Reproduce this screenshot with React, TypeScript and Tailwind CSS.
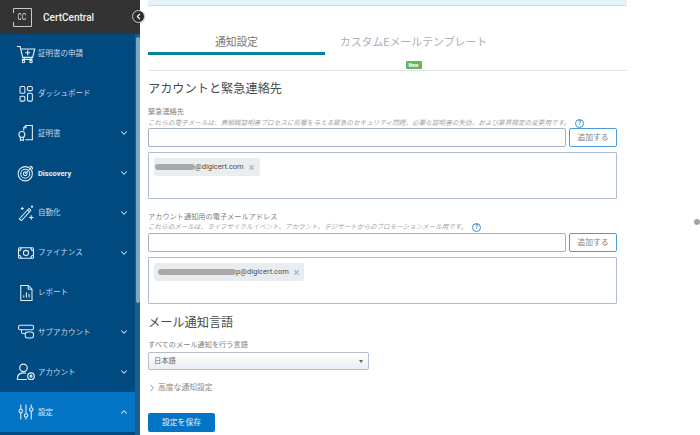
import React from 'react';
import { ChevronDown, ChevronLeft, ChevronRight, ChevronUp, X } from 'lucide-react';

const font = { fontFamily: 'Roboto, "Noto Sans CJK JP", sans-serif' };

const ic = { width: 18, height: 18, viewBox: '0 0 24 24', fill: 'none', stroke: 'currentColor', strokeWidth: 1.4 };

const CartIcon = () => (
  <svg {...ic} width={20} height={20}>
    <path d="M1 3h4l3 13h12l2.500-10H6" />
    <path d="M10 16v2M18 16v2M7 18.500h13" />
    <circle cx="9" cy="21" r="1.500" />
    <circle cx="18" cy="21" r="1.500" />
    <path d="M14 7.500v6M11 10.500h6" />
  </svg>
);
const DashIcon = () => (
  <svg {...ic}>
    <rect x="4" y="2" width="6.500" height="9" rx="1.500" />
    <rect x="14" y="2" width="6.500" height="5.500" rx="1.500" />
    <rect x="4" y="15" width="6.500" height="6.500" rx="1.500" />
    <rect x="14" y="11" width="6.500" height="10.500" rx="1.500" />
  </svg>
);
const CertIcon = () => (
  <svg {...ic}>
    <path d="M9 9V4.500L12 2h8.500v19H11" />
    <path d="M12 2v3H9" />
    <circle cx="6.500" cy="14" r="4" />
    <path d="M4.500 18v4l2-1 2 1v-4" />
  </svg>
);
const DiscoveryIcon = () => (
  <svg {...ic}>
    <circle cx="11" cy="13" r="9.500" />
    <circle cx="11" cy="13" r="6" />
    <circle cx="11" cy="13" r="2.500" />
    <path d="M11 13 20 4M17 3l3 1 1 3" />
  </svg>
);
const WandIcon = () => (
  <svg {...ic}>
    <path d="M3 20 16 6l2.500 2.500L6 22z" />
    <path d="m14 8 2.500 2.500M7 4v4M5 6h4M19 15v6M16 18h6M20 2v3M18.500 3.500h3" />
  </svg>
);
const MoneyIcon = () => (
  <svg {...ic} width={20}>
    <rect x="2" y="5" width="20" height="14" rx="1.500" />
    <circle cx="12" cy="12" r="3.500" />
    <path d="M2 9c2 0 3.500-2 3.500-4M22 9c-2 0-3.500-2-3.500-4M2 15c2 0 3.500 2 3.500 4M22 15c-2 0-3.500 2-3.500 4" />
  </svg>
);
const ReportIcon = () => (
  <svg {...ic}>
    <path d="M5 2h10l5 5v15H5z" />
    <path d="M15 2v5h5M9 18v-3M12.500 18v-7M16 18v-5" />
  </svg>
);
const SubIcon = () => (
  <svg {...ic}>
    <rect x="2" y="3" width="20" height="6" rx="2" />
    <path d="M6 9v3a2 2 0 0 0 2 2h3" />
    <rect x="11" y="12" width="11" height="8" rx="3" />
  </svg>
);
const AccountIcon = () => (
  <svg {...ic} width={20} height={20}>
    <circle cx="9" cy="7" r="4.500" />
    <path d="M1.500 21c0-5 3-8 7.500-8 1 0 2 .2 3 .5M1.500 21H13" />
    <circle cx="18" cy="17" r="4" />
    <circle cx="18" cy="17" r="1.200" />
  </svg>
);
const SlidersIcon = () => (
  <svg {...ic}>
    <path d="M5 2v6M5 13v9M12 2v12M12 19v3M19 2v4M19 11v11" />
    <circle cx="5" cy="10.500" r="2.300" />
    <circle cx="12" cy="16.500" r="2.300" />
    <circle cx="19" cy="8.500" r="2.300" />
  </svg>
);

const navItems = [
  { label: '証明書の申請', icon: <CartIcon />, arrow: false },
  { label: 'ダッシュボード', icon: <DashIcon />, arrow: false },
  { label: '証明書', icon: <CertIcon />, arrow: true },
  { label: 'Discovery', icon: <DiscoveryIcon />, arrow: true, bold: true },
  { label: '自動化', icon: <WandIcon />, arrow: true },
  { label: 'ファイナンス', icon: <MoneyIcon />, arrow: true },
  { label: 'レポート', icon: <ReportIcon />, arrow: false },
  { label: 'サブアカウント', icon: <SubIcon />, arrow: true },
  { label: 'アカウント', icon: <AccountIcon />, arrow: true },
];

function NavRow({ item }: { item: (typeof navItems)[number] }) {
  return (
    <div className="flex h-[39.8px] shrink-0 items-center pl-[14px] pr-[6px]">
      <div className="flex w-[24px] justify-center text-[#e6eff6]">{item.icon}</div>
      <span className={`flex-1 text-[7.500px] ${item.bold ? 'font-bold text-[#e8f0f6]' : 'text-[#c6d9e8]'}`}>{item.label}</span>
      {item.arrow && <ChevronDown size={10} strokeWidth={2.500} className="text-[#dce8f1]" />}
    </div>
  );
}

function Logo() {
  return (
    <div className="relative flex h-[19px] w-[19px] items-center justify-center text-[8.500px] text-[#e6e6e6]">
      <svg width="19" height="19" viewBox="0 0 19 19" fill="none" stroke="#c9c9c9" strokeWidth="1" className="absolute inset-0">
        <path d="M.5 5V.5h18v18H.5V14" />
      </svg>
      <span className="scale-x-75 tracking-[0.5px]">CC</span>
    </div>
  );
}

function Sidebar() {
  return (
    <aside className="flex w-[140px] shrink-0 flex-col bg-[#004a80]">
      <div className="flex h-[34px] shrink-0 items-center bg-[#333333] pl-[13px]">
        <Logo />
        <span className="ml-[11px] text-[10px] font-medium text-[#f2f2f2]">CertCentral</span>
      </div>
      <div className="flex min-h-0 flex-1">
        <nav className="flex w-[135px] flex-col">
          {navItems.map((item) => (
            <NavRow key={item.label} item={item} />
          ))}
          <div className="flex h-[40px] shrink-0 items-center bg-[#0474c4] pl-[14px] pr-[6px]">
            <div className="flex w-[24px] justify-center text-[#e6eff6]">
              <SlidersIcon />
            </div>
            <span className="flex-1 text-[7.500px] text-[#dceaf5]">設定</span>
            <ChevronUp size={10} strokeWidth={2.500} className="text-[#e6eff6]" />
          </div>
        </nav>
        <div className="w-[5px] bg-[#1a5c8e]">
          <div className="mt-[3px] ml-[0.500px] h-[266px] w-[4px] rounded-sm bg-[#7fa5c1]" />
        </div>
      </div>
    </aside>
  );
}

function Chip({ hidden, widthClass, redact }: { hidden: string; widthClass: string; redact: string }) {
  return (
    <div className={`flex h-[18px] items-center rounded-[2px] bg-[#e9edf0] pl-[1px] ${widthClass}`}>
      <span className={`h-[6px] rounded-full bg-[#a9a9a9] blur-[0.6px] ${redact}`} />
      <span className="text-[7.500px] text-[#4a4a4a]">{hidden}</span>
      <X size={7} strokeWidth={4} className="ml-[4px] text-[#b0b5b9]" />
    </div>
  );
}

function ContactGroup({ label, desc, chip, topGap, descClass }: { label: string; desc: string; chip: React.ReactNode; topGap: string; descClass: string }) {
  return (
    <section className={topGap}>
      <div className="text-[7.200px] leading-[10px] text-[#808080]">{label}</div>
      <div className={`flex h-[10px] items-center text-[6.550px] leading-[10px] text-[#a3a3a3] italic ${descClass}`}>
        <span>{desc}</span>
        <span className="ml-[5px] flex h-[9px] w-[9px] items-center justify-center rounded-full border border-[#3f8fd0] text-[6.500px] font-bold text-[#3f8fd0] not-italic">?</span>
      </div>
      <div className="flex w-[469px] gap-[3px]">
        <div className="h-[19px] w-[418px] rounded-[2px] border border-[#a4b1c8] bg-white" />
        <button className="flex h-[19px] w-[48px] items-center justify-center rounded-[2px] border border-[#4a9bd8] bg-white text-[7.800px] text-[#808080]">追加する</button>
      </div>
      <div className="mt-[5px] h-[47px] w-[469px] rounded-[1px] border border-[#b0bcd2] px-[5px] pt-[5px]">{chip}</div>
    </section>
  );
}

export default function App() {
  return (
    <div style={font} className="relative flex h-[435px] w-[700px] overflow-hidden bg-white">
      <Sidebar />
      <main className="w-[479px] pl-[8px]">
        <div className="h-[6px] w-[479px] border-b border-[#b5e5ef] bg-[#e3f3f9]" />
        <div className="flex h-[65px] w-[479px] border-b border-[#e4e4e4] pt-[30px]">
          <div className="h-[19px] w-[177px] border-b-[3px] border-[#00829b] text-center text-[10.800px] leading-[14px] text-[#777777]">通知設定</div>
          <div className="w-[177px] text-center">
            <div className="text-[10.900px] leading-[14px] whitespace-nowrap text-[#a9b1b8]">カスタムEメールテンプレート</div>
            <span className="mt-[4px] inline-block h-[8px] w-[16px] rounded-[1px] bg-[#66b558] text-[5px] leading-[8px] font-bold text-white">New</span>
          </div>
        </div>
        <h2 className="mt-[10px] text-[12.200px] leading-[16px] text-[#4a4a4a]">アカウントと緊急連絡先</h2>
        <ContactGroup
          topGap="mt-[10px]"
          descClass="mt-[1px] tracking-[0.07px]"
          label="緊急連絡先"
          desc="これらの電子メールは、貴組織証明書プロセスに影響を与える緊急のセキュリティ問題、必要な証明書の失効、および業界規定の変更用です。"
          chip={<Chip hidden="@digicert.com" widthClass="w-[106px]" redact="w-[40px]" />}
        />
        <ContactGroup
          topGap="mt-[13px]"
          descClass="mb-[1px]"
          label="アカウント通知用の電子メールアドレス"
          desc="これらのメールは、ライフサイクルイベント、アカウント、デジサートからのプロモーションメール用です。"
          chip={<Chip hidden="p@digicert.com" widthClass="w-[150px]" redact="ml-[3px] w-[78px]" />}
        />
        <h2 className="mt-[11px] text-[12.200px] leading-[16px] text-[#4a4a4a]">メール通知言語</h2>
        <div className="mt-[9px] text-[7.200px] leading-[10px] text-[#808080]">すべてのメール通知を行う言語</div>
        <div className="mt-[2px] flex h-[18px] w-[221px] items-center justify-between rounded-[2px] border border-[#b4bfd0] bg-gradient-to-b from-white to-[#e9edf2] px-[5px] text-[7.300px] text-[#666666]">
          <span>日本語</span>
          <span className="h-0 w-0 border-x-[2.500px] border-t-[3px] border-x-transparent border-t-[#666666]" />
        </div>
        <div className="mt-[11px] flex h-[14px] items-center text-[7.800px] text-[#8a8a8a]">
          <ChevronRight size={12} strokeWidth={1.500} className="-ml-[2px] text-[#2f86c8]" />
          <span>高度な通知設定</span>
        </div>
        <button className="mt-[18px] flex h-[19px] w-[67px] items-center justify-center rounded-[2px] bg-[#0474c4] text-[7.800px] text-[#e6f0f8]">設定を保存</button>
      </main>
      <div className="absolute top-[10px] left-[132px] flex h-[13px] w-[13px] items-center justify-center rounded-full border border-[#cfcfcf] bg-[#2e2e2e] shadow-sm">
        <ChevronLeft size={9} strokeWidth={3} className="text-white" />
      </div>
      <div className="absolute top-[219px] left-[694px] h-[6px] w-[6px] rounded-full bg-[#a4a4a4]" />
    </div>
  );
}
